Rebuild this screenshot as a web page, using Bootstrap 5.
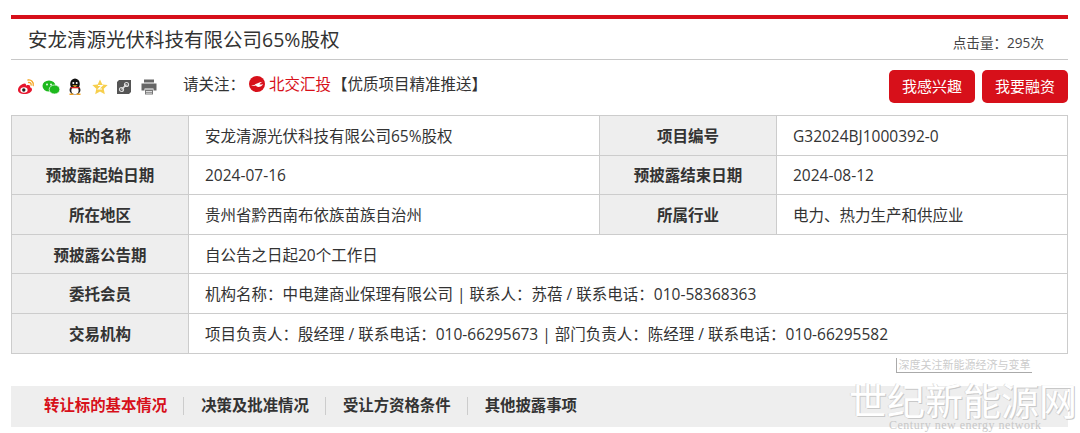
<!DOCTYPE html>
<html lang="zh"><head><meta charset="utf-8"><title>安龙清源光伏科技有限公司65%股权</title>
<link href="https://cdn.jsdelivr.net/npm/bootstrap@5.3.0/dist/css/bootstrap.min.css" rel="stylesheet">
<style>
html,body{height:433px;overflow:hidden}
body{font-family:"Open Sans","Noto Sans CJK SC",sans-serif;color:#333;background:#fff;font-size:14px;position:relative}
.pg{padding:15px 12px 0 11px}
.topline{border-top:4px solid #d7101a}
.headrow{height:41px;border-bottom:1px solid #c8c8c8;padding:0 24px 0 17px}
.ttl{font-size:19.5px;font-weight:400;margin:0;line-height:41px;color:#333}
.hits{font-size:13.6px;line-height:16px;padding-top:16px;color:#444}
.toolrow{height:55px;padding:10px 0 0 6px}
.ic{width:18px;height:18px;display:block}
.icons{gap:6.5px;margin-top:8px;width:166px}
.follow{font-size:15.5px;line-height:24px;height:28px}
.follow .bj{color:#d7101a;margin-right:1px}
.follow svg{margin-left:4px}
.btn-red{background:#d7101a;color:#fff;border:0;border-radius:5px;width:86px;height:33px;padding:0;font-size:15px;line-height:33px}
.btn-red:hover{background:#c00c15;color:#fff}
.acts{gap:7px}
.dtbl{width:1057px;table-layout:fixed;border-collapse:collapse;margin:0;font-size:15.5px}
.dtbl th,.dtbl td{border:1px solid #ccc;height:39.6px;padding:1px 16px 0;vertical-align:middle;line-height:20px}
.dtbl th{background:#eee;text-align:center;font-weight:700;color:#333;padding:1px 0 0}
.tabbar{background:#eee;height:41px;margin-top:32px;padding-left:33px;font-size:15.4px;font-weight:700;color:#333}
.tabbar span{padding:0 16px 0 17px;border-right:1px solid #ccc;line-height:18px}
.tabbar span:last-child{border-right:0}
.tabbar .on{color:#d7101a;padding-left:0}
.wm{position:absolute;left:849px;top:357px;width:231px;height:76px;pointer-events:none}
.wm1{position:absolute;left:47px;top:1px;width:136px;height:15px;font-size:11px;line-height:14px;color:#ccc;background:#fff;border-left:1px solid #aaa;border-bottom:1px solid #aaa;text-align:center;white-space:nowrap}
.wm2{position:absolute;left:0;top:22px;font-size:38px;line-height:40px;white-space:nowrap;font-family:"Noto Sans CJK SC",sans-serif;font-weight:400;color:#fff;text-shadow:1px 1px 0 #c8c8c8,-1px 0 0 #ddd}
.wm3{position:absolute;left:40px;top:62px;font-family:"Liberation Serif",serif;font-size:12px;line-height:13px;color:#c8c8c8;white-space:nowrap;letter-spacing:.5px}
</style></head><body>
<div class="pg">
<div class="topline"></div>
<div class="headrow d-flex justify-content-between">
<h1 class="ttl">安龙清源光伏科技有限公司65%股权</h1>
<div class="hits">点击量：295次</div>
</div>
<div class="toolrow d-flex justify-content-between">
<div class="d-flex">
<div class="icons d-flex align-items-start">
<svg class="ic" viewBox="0 0 18 18"><path d="M8 5.500C4 6 1 9 1 12c0 2.600 3 4 6.500 4 4 0 7.500-2 7.500-4.500 0-1.500-1.500-2-2-2.200.5-1.300 0-2.300-2-2.200-1 0-2 .6-2 .6s.4-2-1-2.200z" fill="#e6162d"/><ellipse cx="7" cy="12" rx="3.600" ry="2.800" fill="#fff"/><circle cx="6.800" cy="12" r="1.700" fill="#222"/><path d="M11 2c3-.6 6 2 5.200 5.500M11.500 4.500c1.600-.3 3 1 2.600 2.600" fill="none" stroke="#f5a623" stroke-width="1.300" stroke-linecap="round"/></svg>
<svg class="ic" viewBox="0 0 18 18"><ellipse cx="7" cy="8" rx="6.500" ry="5.500" fill="#1db91d"/><ellipse cx="12.500" cy="11.500" rx="5.300" ry="4.500" fill="#1db91d" stroke="#fff" stroke-width=".7"/><circle cx="5" cy="6.500" r=".9" fill="#fff"/><circle cx="9" cy="6.500" r=".9" fill="#fff"/></svg>
<svg class="ic" viewBox="0 0 18 18"><ellipse cx="9" cy="6" rx="4.800" ry="5.500" fill="#111"/><ellipse cx="9" cy="12" rx="5.500" ry="4.500" fill="#222"/><ellipse cx="9" cy="12.500" rx="3.600" ry="3.800" fill="#fff"/><circle cx="7.300" cy="5" r="1" fill="#fff"/><circle cx="10.700" cy="5" r="1" fill="#fff"/><path d="M6.200 7.200h5.600L9 9z" fill="#e8b020"/><path d="M4.500 9h9v1.300h-9z" fill="#d22"/><path d="M3.500 15.500h4V17h-4zM10.500 15.500h4V17h-4z" fill="#f0a020"/></svg>
<svg class="ic" viewBox="0 0 18 18"><path d="M9 1.500l2.300 5 5.400.6-4 3.700 1.100 5.400L9 13.500l-4.800 2.700 1.100-5.400-4-3.700 5.400-.6z" fill="#f7cf4d"/><path d="M7 7.500h4L7.500 11H11" fill="none" stroke="#fff" stroke-width="1.200"/></svg>
<svg class="ic" viewBox="0 0 18 18"><path d="M4 2h12v12l-2 2H2V4z" fill="#555"/><path d="M6.500 11.500l5-5" stroke="#ddd" stroke-width="1.600"/><circle cx="11.500" cy="6.500" r="2" fill="none" stroke="#ddd" stroke-width="1.200"/><circle cx="6.500" cy="11.500" r="2" fill="none" stroke="#ddd" stroke-width="1.200"/></svg>
<svg class="ic" viewBox="0 0 18 18"><path d="M4 1.500h10v3H4z" fill="#666"/><path d="M1.500 5.500h15v7h-3v-2h-9v2h-3z" fill="#666"/><path d="M5 11.500h8v5H5z" fill="#777"/><path d="M6 13h6v.8H6zM6 14.800h6v.8H6z" fill="#fff"/></svg>
</div>
<div class="follow d-flex align-items-center">
<span>请关注：</span>
<svg class="me-1" width="16" height="16" viewBox="0 0 16 16"><circle cx="8" cy="8" r="8" fill="#d7101a"/><path d="M2 9.800C6 9.500 7.500 6.500 14 5.800c-2 .8-3 1.600-3.500 2.800 1 .1 2.500-.1 3.500-.6-1 3.200-6.500 3.800-7 1.600-1 .5-2.500.7-5 .2z" fill="#fff"/></svg>
<span class="bj">北交汇投</span><span>【优质项目精准推送】</span>
</div>
</div>
<div class="acts d-flex">
<button type="button" class="btn btn-red">我感兴趣</button>
<button type="button" class="btn btn-red">我要融资</button>
</div>
</div>
<table class="dtbl">
<colgroup><col style="width:177px"><col style="width:411px"><col style="width:177px"><col></colgroup>
<tbody>
<tr><th>标的名称</th><td>安龙清源光伏科技有限公司65%股权</td><th>项目编号</th><td>G32024BJ1000392-0</td></tr>
<tr><th>预披露起始日期</th><td>2024-07-16</td><th>预披露结束日期</th><td>2024-08-12</td></tr>
<tr><th>所在地区</th><td>贵州省黔西南布依族苗族自治州</td><th>所属行业</th><td>电力、热力生产和供应业</td></tr>
<tr><th>预披露公告期</th><td colspan="3">自公告之日起20个工作日</td></tr>
<tr><th>委托会员</th><td colspan="3">机构名称：中电建商业保理有限公司 | 联系人：苏蓓 / 联系电话：010-58368363</td></tr>
<tr><th>交易机构</th><td colspan="3">项目负责人：殷经理 / 联系电话：010-66295673 | 部门负责人：陈经理 / 联系电话：010-66295582</td></tr>
</tbody></table>
<div class="tabbar d-flex align-items-center">
<span class="on">转让标的基本情况</span><span>决策及批准情况</span><span>受让方资格条件</span><span>其他披露事项</span>
</div>
</div>
<div class="wm">
<div class="wm1">深度关注新能源经济与变革</div>
<div class="wm2">世纪新能源网</div>
<div class="wm3">Century new energy network</div>
</div>
</body></html>
